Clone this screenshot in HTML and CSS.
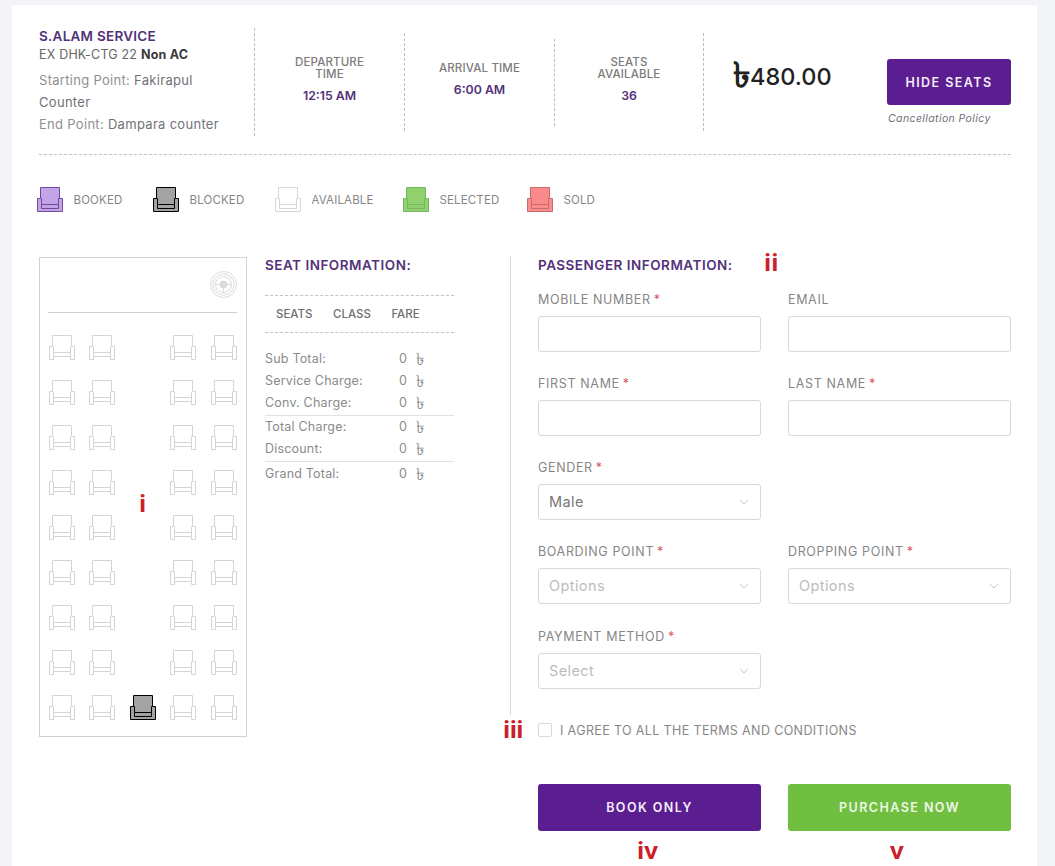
FILE: index.html
```html
<!DOCTYPE html>
<html lang="en">
<head>
<meta charset="utf-8">
<title>Seat booking</title>
<link rel="stylesheet" href="styles.css">
</head>
<body>
<svg class="defs" width="0" height="0" aria-hidden="true">
  <symbol id="seat" viewBox="0 0 26 25">
    <path d="M3.5 .5H22.5V11.5H25.5V24.5H.5V11.5H3.5Z"/>
    <path d="M3.5 11.5H4.5V17.5H21.5V11.5H22.5M4.5 17.5V21.5H21.5V17.5" fill="none"/>
  </symbol>
  <symbol id="seat-open" viewBox="0 0 26 25">
    <path d="M3.5 .5H22.5V11.5H25.5V24.5H21.5V21.5H4.5V24.5H.5V11.5H3.5Z"/>
    <path d="M4.5 11.5V21.5M21.5 11.5V21.5M4.5 17.5H21.5" fill="none"/>
  </symbol>
</svg>
<main class="card">
  <header class="trip">
    <div class="trip-info">
      <h1 class="operator">S.ALAM SERVICE</h1>
      <p class="coach">EX DHK-CTG 22 <b>Non AC</b></p>
      <p class="points">Starting Point: <span class="place">Fakirapul</span> <span class="place">Counter</span></p>
      <p class="points">End Point: <span class="place">Dampara counter</span></p>
    </div>
    <div class="vline vline-lg"></div>
    <div class="stat"><div class="stat-label">DEPARTURE<br>TIME</div><div class="stat-value">12:15 AM</div></div>
    <div class="vline vline-md"></div>
    <div class="stat"><div class="stat-label">ARRIVAL TIME</div><div class="stat-value">6:00 AM</div></div>
    <div class="vline vline-sm"></div>
    <div class="stat stat-narrow"><div class="stat-label">SEATS<br>AVAILABLE</div><div class="stat-value">36</div></div>
    <div class="vline vline-md"></div>
    <div class="price"><span class="taka">৳</span>480.00</div>
    <div class="hide-col">
      <button class="btn btn-hide" type="button">HIDE SEATS</button>
      <a class="policy">Cancellation Policy</a>
    </div>
  </header>

  <ul class="legend">
    <li class="legend-item"><svg class="seat booked"><use href="#seat"/></svg>BOOKED</li>
    <li class="legend-item"><svg class="seat blocked"><use href="#seat"/></svg>BLOCKED</li>
    <li class="legend-item"><svg class="seat available"><use href="#seat"/></svg>AVAILABLE</li>
    <li class="legend-item"><svg class="seat selected"><use href="#seat"/></svg>SELECTED</li>
    <li class="legend-item"><svg class="seat sold"><use href="#seat"/></svg>SOLD</li>
  </ul>

  <section class="booking">
    <div class="bus">
      <div class="bus-front">
        <svg class="wheel" viewBox="0 0 27 27">
          <circle cx="13.5" cy="13.5" r="13"/>
          <circle cx="13.5" cy="13.5" r="10.5"/>
          <circle cx="13.5" cy="13.5" r="8"/>
          <circle class="hub" cx="13.5" cy="13.5" r="3.5"/>
          <path d="M5.5 13.5H10M17 13.5H21.5M13.5 17V21.5"/>
        </svg>
      </div>
      <div class="seats">
        <svg class="seat free"><use href="#seat-open"/></svg><svg class="seat free"><use href="#seat-open"/></svg><span></span><svg class="seat free"><use href="#seat-open"/></svg><svg class="seat free"><use href="#seat-open"/></svg>
        <svg class="seat free"><use href="#seat-open"/></svg><svg class="seat free"><use href="#seat-open"/></svg><span></span><svg class="seat free"><use href="#seat-open"/></svg><svg class="seat free"><use href="#seat-open"/></svg>
        <svg class="seat free"><use href="#seat-open"/></svg><svg class="seat free"><use href="#seat-open"/></svg><span></span><svg class="seat free"><use href="#seat-open"/></svg><svg class="seat free"><use href="#seat-open"/></svg>
        <svg class="seat free"><use href="#seat-open"/></svg><svg class="seat free"><use href="#seat-open"/></svg><span></span><svg class="seat free"><use href="#seat-open"/></svg><svg class="seat free"><use href="#seat-open"/></svg>
        <svg class="seat free"><use href="#seat-open"/></svg><svg class="seat free"><use href="#seat-open"/></svg><span></span><svg class="seat free"><use href="#seat-open"/></svg><svg class="seat free"><use href="#seat-open"/></svg>
        <svg class="seat free"><use href="#seat-open"/></svg><svg class="seat free"><use href="#seat-open"/></svg><span></span><svg class="seat free"><use href="#seat-open"/></svg><svg class="seat free"><use href="#seat-open"/></svg>
        <svg class="seat free"><use href="#seat-open"/></svg><svg class="seat free"><use href="#seat-open"/></svg><span></span><svg class="seat free"><use href="#seat-open"/></svg><svg class="seat free"><use href="#seat-open"/></svg>
        <svg class="seat free"><use href="#seat-open"/></svg><svg class="seat free"><use href="#seat-open"/></svg><span></span><svg class="seat free"><use href="#seat-open"/></svg><svg class="seat free"><use href="#seat-open"/></svg>
        <svg class="seat free"><use href="#seat-open"/></svg><svg class="seat free"><use href="#seat-open"/></svg><svg class="seat blocked"><use href="#seat"/></svg><svg class="seat free"><use href="#seat-open"/></svg><svg class="seat free"><use href="#seat-open"/></svg>
      </div>
    </div>

    <aside class="summary">
      <h2 class="section-title">SEAT INFORMATION:</h2>
      <div class="summary-head"><span>SEATS</span><span>CLASS</span><span>FARE</span></div>
      <div class="totals">
        <div class="total-row"><span>Sub Total:</span><span>0</span><span class="taka-sm">৳</span></div>
        <div class="total-row"><span>Service Charge:</span><span>0</span><span class="taka-sm">৳</span></div>
        <div class="total-row"><span>Conv. Charge:</span><span>0</span><span class="taka-sm">৳</span></div>
      </div>
      <div class="totals totals-ruled">
        <div class="total-row"><span>Total Charge:</span><span>0</span><span class="taka-sm">৳</span></div>
        <div class="total-row"><span>Discount:</span><span>0</span><span class="taka-sm">৳</span></div>
      </div>
      <div class="totals totals-ruled">
        <div class="total-row"><span>Grand Total:</span><span>0</span><span class="taka-sm">৳</span></div>
      </div>
    </aside>

    <div class="vline vline-form"></div>

    <form class="passenger">
      <h2 class="section-title">PASSENGER INFORMATION:</h2>
      <div class="fields">
        <label class="field"><span class="field-label">MOBILE NUMBER<i>*</i></span><input class="control" type="text"></label>
        <label class="field"><span class="field-label">EMAIL</span><input class="control" type="text"></label>
        <label class="field"><span class="field-label">FIRST NAME<i>*</i></span><input class="control" type="text"></label>
        <label class="field"><span class="field-label">LAST NAME<i>*</i></span><input class="control" type="text"></label>
        <div class="field"><span class="field-label">GENDER<i>*</i></span><div class="control select">Male<svg class="chev" viewBox="0 0 10 6"><path d="M1 1l4 4 4-4"/></svg></div></div>
        <div class="field-blank"></div>
        <div class="field"><span class="field-label">BOARDING POINT<i>*</i></span><div class="control select placeholder">Options<svg class="chev" viewBox="0 0 10 6"><path d="M1 1l4 4 4-4"/></svg></div></div>
        <div class="field"><span class="field-label">DROPPING POINT<i>*</i></span><div class="control select placeholder">Options<svg class="chev" viewBox="0 0 10 6"><path d="M1 1l4 4 4-4"/></svg></div></div>
        <div class="field field-last"><span class="field-label">PAYMENT METHOD<i>*</i></span><div class="control select placeholder">Select<svg class="chev" viewBox="0 0 10 6"><path d="M1 1l4 4 4-4"/></svg></div></div>
      </div>
      <label class="agree"><input class="check" type="checkbox">I AGREE TO ALL THE TERMS AND CONDITIONS</label>
      <div class="actions">
        <button class="btn btn-book" type="button">BOOK ONLY</button>
        <button class="btn btn-buy" type="button">PURCHASE NOW</button>
      </div>
    </form>
  </section>
</main>
<span class="mark mark-i">i</span>
<span class="mark mark-ii">ii</span>
<span class="mark mark-iii">iii</span>
<span class="mark mark-iv">iv</span>
<span class="mark mark-v">v</span>
</body>
</html>
```
FILE: styles.css
```css
* { box-sizing: border-box; }
html, body { height: 866px; overflow: hidden; }
body {
  margin: 0;
  position: relative;
  background: #f3f4f8;
  font-family: Inter, "Noto Sans", "DejaVu Sans", sans-serif;
  font-size: 13px;
  color: #777;
}
.defs { position: absolute; }
h1, h2, p, ul { margin: 0; padding: 0; }
ul { list-style: none; }

.card {
  margin: 5px 18px 0 12px;
  height: 861px;
  padding: 23px 26px 0 27px;
  background: #fff;
}

/* Trip header */
.trip {
  display: flex;
  align-items: center;
  height: 127px;
  padding-bottom: 18px;
  border-bottom: 1px dashed #c4c4c4;
}
.trip-info { width: 215px; flex: none; align-self: flex-start; }
.operator { font-size: 13.5px; line-height: 16px; font-weight: 600; color: #53327a; letter-spacing: .25px; }
.coach { font-size: 12.5px; line-height: 18px; margin: 2px 0 5px; color: #666; letter-spacing: .2px; }
.coach b { color: #3a3a3a; font-weight: 700; }
.points { font-size: 13px; line-height: 22px; color: #8f8f8f; width: 190px; letter-spacing: .3px; }
.place { color: #727278; }

.vline { flex: none; width: 0; border-left: 1px dashed #bdbdbd; }
.vline-lg { height: 108px; }
.vline-md { height: 98px; }
.vline-sm { height: 87px; }

.stat {
  flex: none;
  width: 149px;
  text-align: center;
  padding-bottom: 4px;
}
.stat-narrow { width: 148px; }
.stat-label { font-size: 11.5px; line-height: 12px; font-weight: 500; color: #7b7b7b; letter-spacing: .15px; }
.stat-value { margin-top: 8px; font-size: 12.3px; line-height: 16px; font-weight: 600; color: #53327a; }

.price {
  flex: none;
  width: 183px;
  padding: 0 0 12px 29px;
  font-size: 23.5px;
  font-weight: 500;
  color: #222;
  white-space: nowrap;
}
.taka { font-size: 35px; line-height: 0; font-weight: 700; vertical-align: -2px; }
.taka-sm { font-size: 17px; line-height: 22px; }

.hide-col { flex: none; width: 124px; align-self: flex-start; margin-top: 31px; }
.policy {
  display: block;
  margin: 7px 0 0 1px;
  font-size: 10.5px;
  line-height: 14px;
  font-style: italic;
  color: #6f6f78;
  white-space: nowrap;
  letter-spacing: .4px;
}

.btn {
  display: block;
  border: 0;
  border-radius: 3px;
  color: #f5ecf8;
  font-family: inherit;
  font-size: 12.5px;
  font-weight: 600;
  letter-spacing: 1.45px;
}
.btn-hide { width: 124px; height: 46px; background: #5a1e91; }
.btn-book { width: 223px; height: 47px; background: #5a1e91; }
.btn-buy { width: 223px; height: 47px; background: #70bf41; color: #eef7e6; }

/* Legend */
.legend {
  display: grid;
  grid-template-columns: 116px 122px 128px 124px auto;
  margin: 32px 0 45px -2px;
  height: 25px;
}
.legend-item { display: flex; align-items: center; gap: 10.5px; font-size: 11.5px; color: #868686; letter-spacing: .15px; }

.seat { display: block; width: 26px; height: 25px; }
.booked { fill: #c3a4e6; stroke: #6f4a9c; }
.blocked { fill: #a3a3a3; stroke: #000; }
.available { fill: #fff; stroke: #d6d6d6; }
.selected { fill: #8fd06f; stroke: #79b65c; }
.sold { fill: #fb8a8a; stroke: #c76a6a; }
.free { fill: #fff; stroke: #d4d4d4; }

/* Booking area */
.booking { display: flex; align-items: flex-start; }

.bus {
  flex: none;
  width: 208px;
  height: 480px;
  padding: 13px 9px 0 8px;
  border: 1px solid #d2d2d2;
}
.bus-front {
  display: flex;
  justify-content: flex-end;
  height: 42px;
  border-bottom: 1px solid #cfcfcf;
}
.wheel { width: 27px; height: 27px; fill: none; stroke: #dadada; stroke-width: 1; }
.wheel .hub { fill: #dcdcdc; }
.seats {
  display: grid;
  grid-template-columns: repeat(5, 26px);
  column-gap: 14.4px;
  row-gap: 20px;
  margin: 22px 0 0 1px;
}

.summary { flex: none; width: 189px; margin-left: 18px; }
.section-title { font-size: 13.5px; line-height: 16px; font-weight: 600; color: #53327a; letter-spacing: .5px; }
.summary-head {
  display: flex;
  gap: 20.5px;
  height: 38px;
  margin-top: 22px;
  padding-left: 11px;
  align-items: center;
  border-top: 1px dashed #c4c4c4;
  border-bottom: 1px dashed #c4c4c4;
  font-size: 11.5px;
  font-weight: 500;
  color: #6f6f6f;
}
.totals { font-size: 12.5px; color: #8a8a8a; letter-spacing: .2px; }
.summary-head + .totals { padding-top: 15px; padding-bottom: 1px; }
.totals-ruled { border-top: 1px solid #e2e2e2; padding-bottom: 1px; }
.totals-ruled:last-child { padding-top: 1px; }
.total-row {
  display: grid;
  grid-template-columns: 134px 17px auto;
  line-height: 22px;
  height: 22px;
}

.vline-form { height: 459px; margin: -1px 27px 0 56px; border-left: 1px solid #d8d8d8; }

.passenger { flex: none; width: 473px; }
.fields {
  display: grid;
  grid-template-columns: 223px 223px;
  column-gap: 27px;
  row-gap: 23px;
  margin-top: 18px;
}
.field { display: block; }
.field-last { margin-top: 1px; }
.field-label {
  display: block;
  height: 17px;
  margin-bottom: 8px;
  font-size: 12.5px;
  line-height: 17px;
  color: #868686;
  letter-spacing: .65px;
}
.field-label i { margin-left: 3px; color: #d4565e; font-style: normal; }
.control {
  display: block;
  width: 100%;
  height: 36px;
  padding: 0 10px;
  border: 1px solid #d9d9d9;
  border-radius: 3px;
  background: #fff;
  font-family: inherit;
  font-size: 14.5px;
  letter-spacing: .4px;
  color: #777;
}
.select { display: flex; align-items: center; justify-content: space-between; line-height: 34px; }
.placeholder { color: #bcbcbc; }
.chev { width: 10px; height: 6px; fill: none; stroke: #c8c8c8; stroke-width: 1; margin-right: 1px; }

.agree {
  display: flex;
  align-items: center;
  gap: 8px;
  margin-top: 34px;
  height: 14px;
  font-size: 12.5px;
  color: #868686;
  letter-spacing: .37px;
}
.check {
  appearance: none;
  width: 14px;
  height: 14px;
  margin: 0;
  border: 1px solid #d9d9d9;
  border-radius: 2px;
  background: #fff;
}
.actions { display: flex; gap: 27px; margin-top: 47px; }

/* Red annotation marks placed over the screenshot */
.mark {
  position: absolute;
  font-family: "Noto Sans", sans-serif;
  font-size: 24px;
  line-height: 24px;
  font-weight: 700;
  color: #cb1f2e;
}
.mark-i { left: 139px; top: 491px; }
.mark-ii { left: 764px; top: 250px; }
.mark-iii { left: 503px; top: 717px; letter-spacing: -.5px; }
.mark-iv { left: 637px; top: 838px; }
.mark-v { left: 890px; top: 838px; }
```
